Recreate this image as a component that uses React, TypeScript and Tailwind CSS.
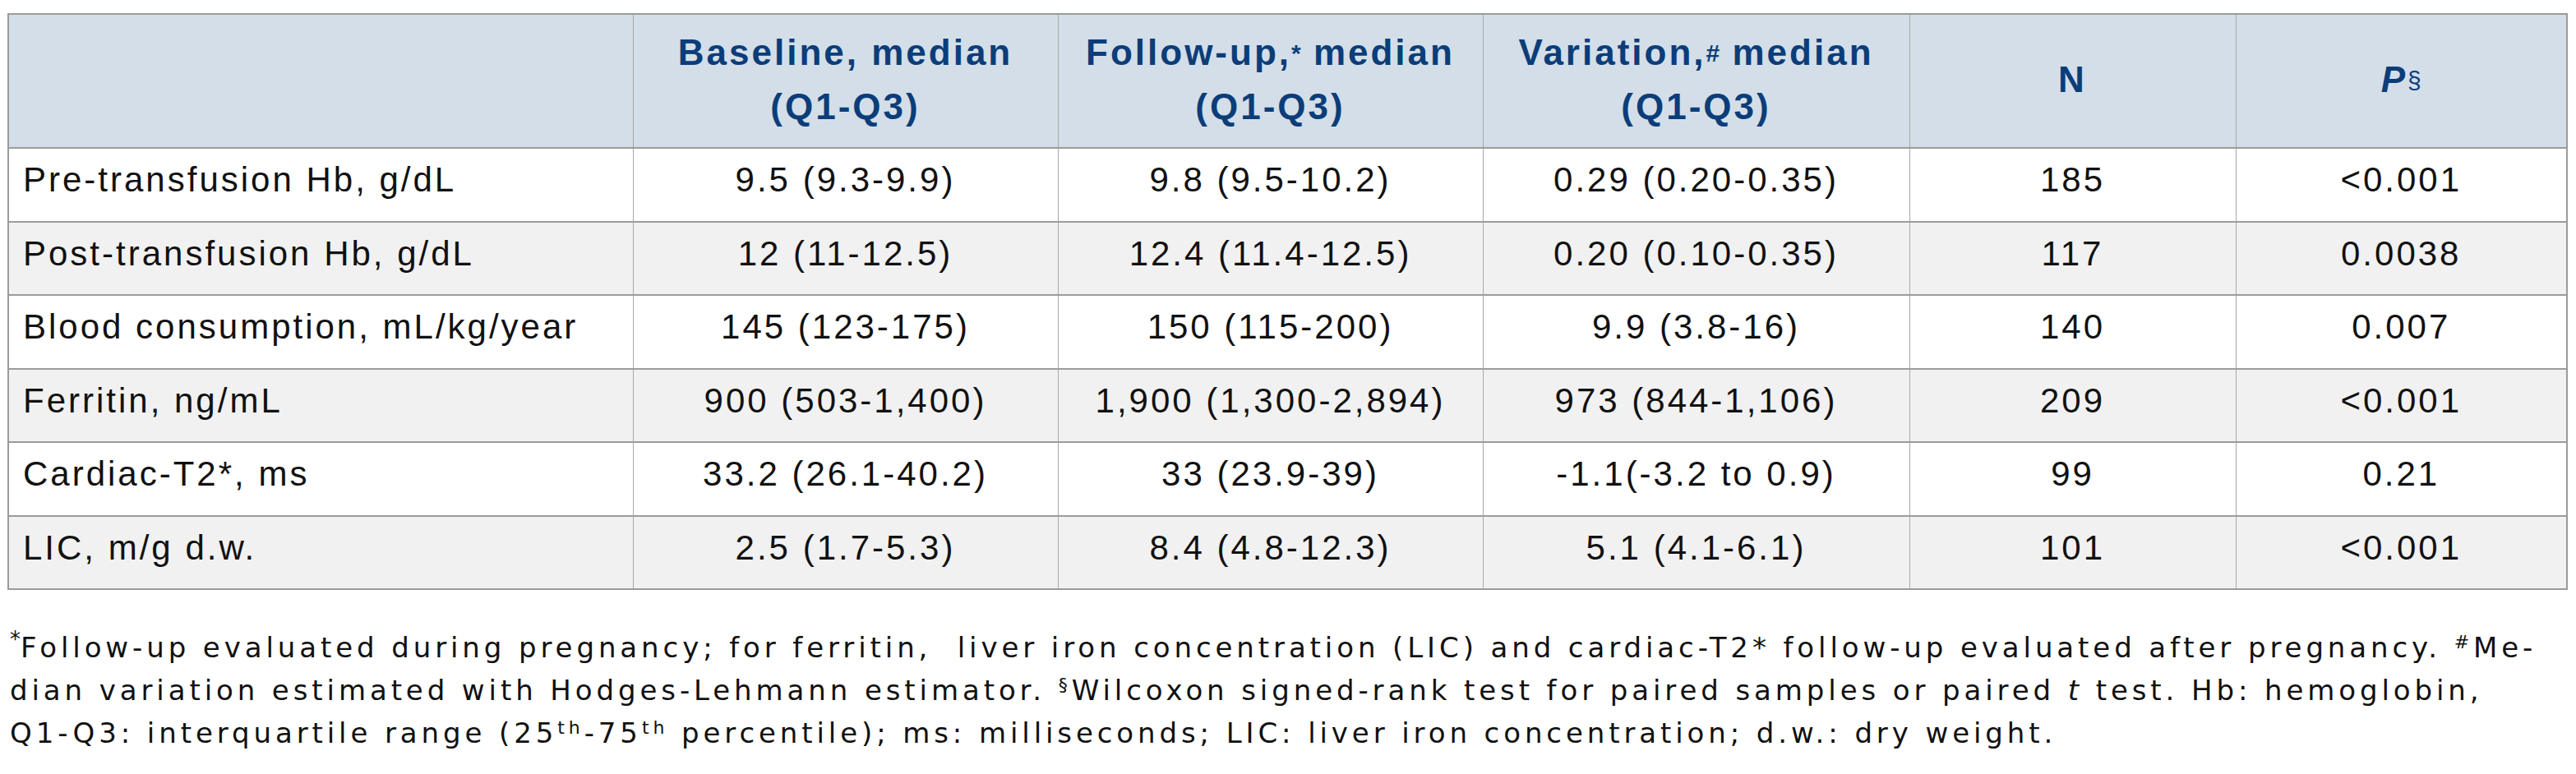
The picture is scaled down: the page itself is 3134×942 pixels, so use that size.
import React from "react";

const rows: string[][] = [
  ["Pre-transfusion Hb, g/dL", "9.5 (9.3-9.9)", "9.8 (9.5-10.2)", "0.29 (0.20-0.35)", "185", "<0.001"],
  ["Post-transfusion Hb, g/dL", "12 (11-12.5)", "12.4 (11.4-12.5)", "0.20 (0.10-0.35)", "117", "0.0038"],
  ["Blood consumption, mL/kg/year", "145 (123-175)", "150 (115-200)", "9.9 (3.8-16)", "140", "0.007"],
  ["Ferritin, ng/mL", "900 (503-1,400)", "1,900 (1,300-2,894)", "973 (844-1,106)", "209", "<0.001"],
  ["Cardiac-T2*, ms", "33.2 (26.1-40.2)", "33 (23.9-39)", "-1.1(-3.2 to 0.9)", "99", "0.21"],
  ["LIC, m/g d.w.", "2.5 (1.7-5.3)", "8.4 (4.8-12.3)", "5.1 (4.1-6.1)", "101", "<0.001"],
];

const th =
  "border-x border-[#a8a8a8] text-[#0b3d79] font-bold text-[44px] leading-[66px] tracking-[3px] text-center align-middle pb-[4px] [font-family:'Liberation_Sans',Arial,sans-serif]";

function Head({ first, sup }: { first: string; sup?: string }) {
  return (
    <>
      {first}
      {sup ? <sup className="text-[30px] relative top-[-4px] tracking-normal">{sup}</sup> : null} median
      <br />
      (Q1-Q3)
    </>
  );
}

export default function App() {
  return (
    <div className="w-[3134px] h-[942px] bg-white pl-[9px] pt-[16px] overflow-hidden">
      <table className="table-fixed border-collapse w-[3113px] border-2 border-[#9b9b9b]">
        <colgroup>
          <col className="w-[760px]" />
          <col className="w-[517px]" />
          <col className="w-[517px]" />
          <col className="w-[519px]" />
          <col className="w-[397px]" />
          <col className="w-[403px]" />
        </colgroup>
        <thead>
          <tr className="h-[163px] bg-[#d3dee8] border-b-2 border-[#9b9b9b]">
            <th className="border-x border-[#a8a8a8]"></th>
            <th className={th}>
              <Head first="Baseline," />
            </th>
            <th className={th}>
              <Head first="Follow-up," sup="*" />
            </th>
            <th className={th}>
              <Head first="Variation," sup="#" />
            </th>
            <th className={th}>N</th>
            <th className={th}>
              <i>P</i>
              <sup className="text-[30px] font-normal relative top-[-4px] tracking-normal">§</sup>
            </th>
          </tr>
        </thead>
        <tbody>
          {rows.map((r, i) => (
            <tr
              key={i}
              className={`h-[89.5px] border-b-2 border-[#9b9b9b] ${i % 2 === 1 ? "bg-[#f1f1f1]" : "bg-white"}`}
            >
              {r.map((c, j) => (
                <td
                  key={j}
                  className={`border-x border-[#a8a8a8] align-middle pb-[12px] text-[42px] tracking-[3px] text-[#111111] [font-family:'Liberation_Sans',Arial,sans-serif] whitespace-nowrap ${
                    j === 0 ? "text-left pl-[17px]" : "text-center"
                  }`}
                >
                  {c}
                </td>
              ))}
            </tr>
          ))}
        </tbody>
      </table>
      <div className="mt-[44px] pl-[3px] text-[34px] leading-[52px] tracking-[4.9px] text-[#111111] [font-family:'DejaVu_Sans',sans-serif]">
        <div className="whitespace-nowrap">
          <sup className="text-[26px] tracking-normal">*</sup>Follow-up evaluated during pregnancy; for ferritin,&nbsp; liver iron concentration (LIC) and cardiac-T2* follow-up evaluated after pregnancy. <sup className="text-[22px]">#</sup>Me-
        </div>
        <div className="whitespace-nowrap">
          dian variation estimated with Hodges-Lehmann estimator. <sup className="text-[22px]">§</sup>Wilcoxon signed-rank test for paired samples or paired <i>t</i> test. Hb: hemoglobin,
        </div>
        <div className="whitespace-nowrap">
          Q1-Q3: interquartile range (25<sup className="text-[22px]">th</sup>-75<sup className="text-[22px]">th</sup> percentile); ms: milliseconds; LIC: liver iron concentration; d.w.: dry weight.
        </div>
      </div>
    </div>
  );
}
